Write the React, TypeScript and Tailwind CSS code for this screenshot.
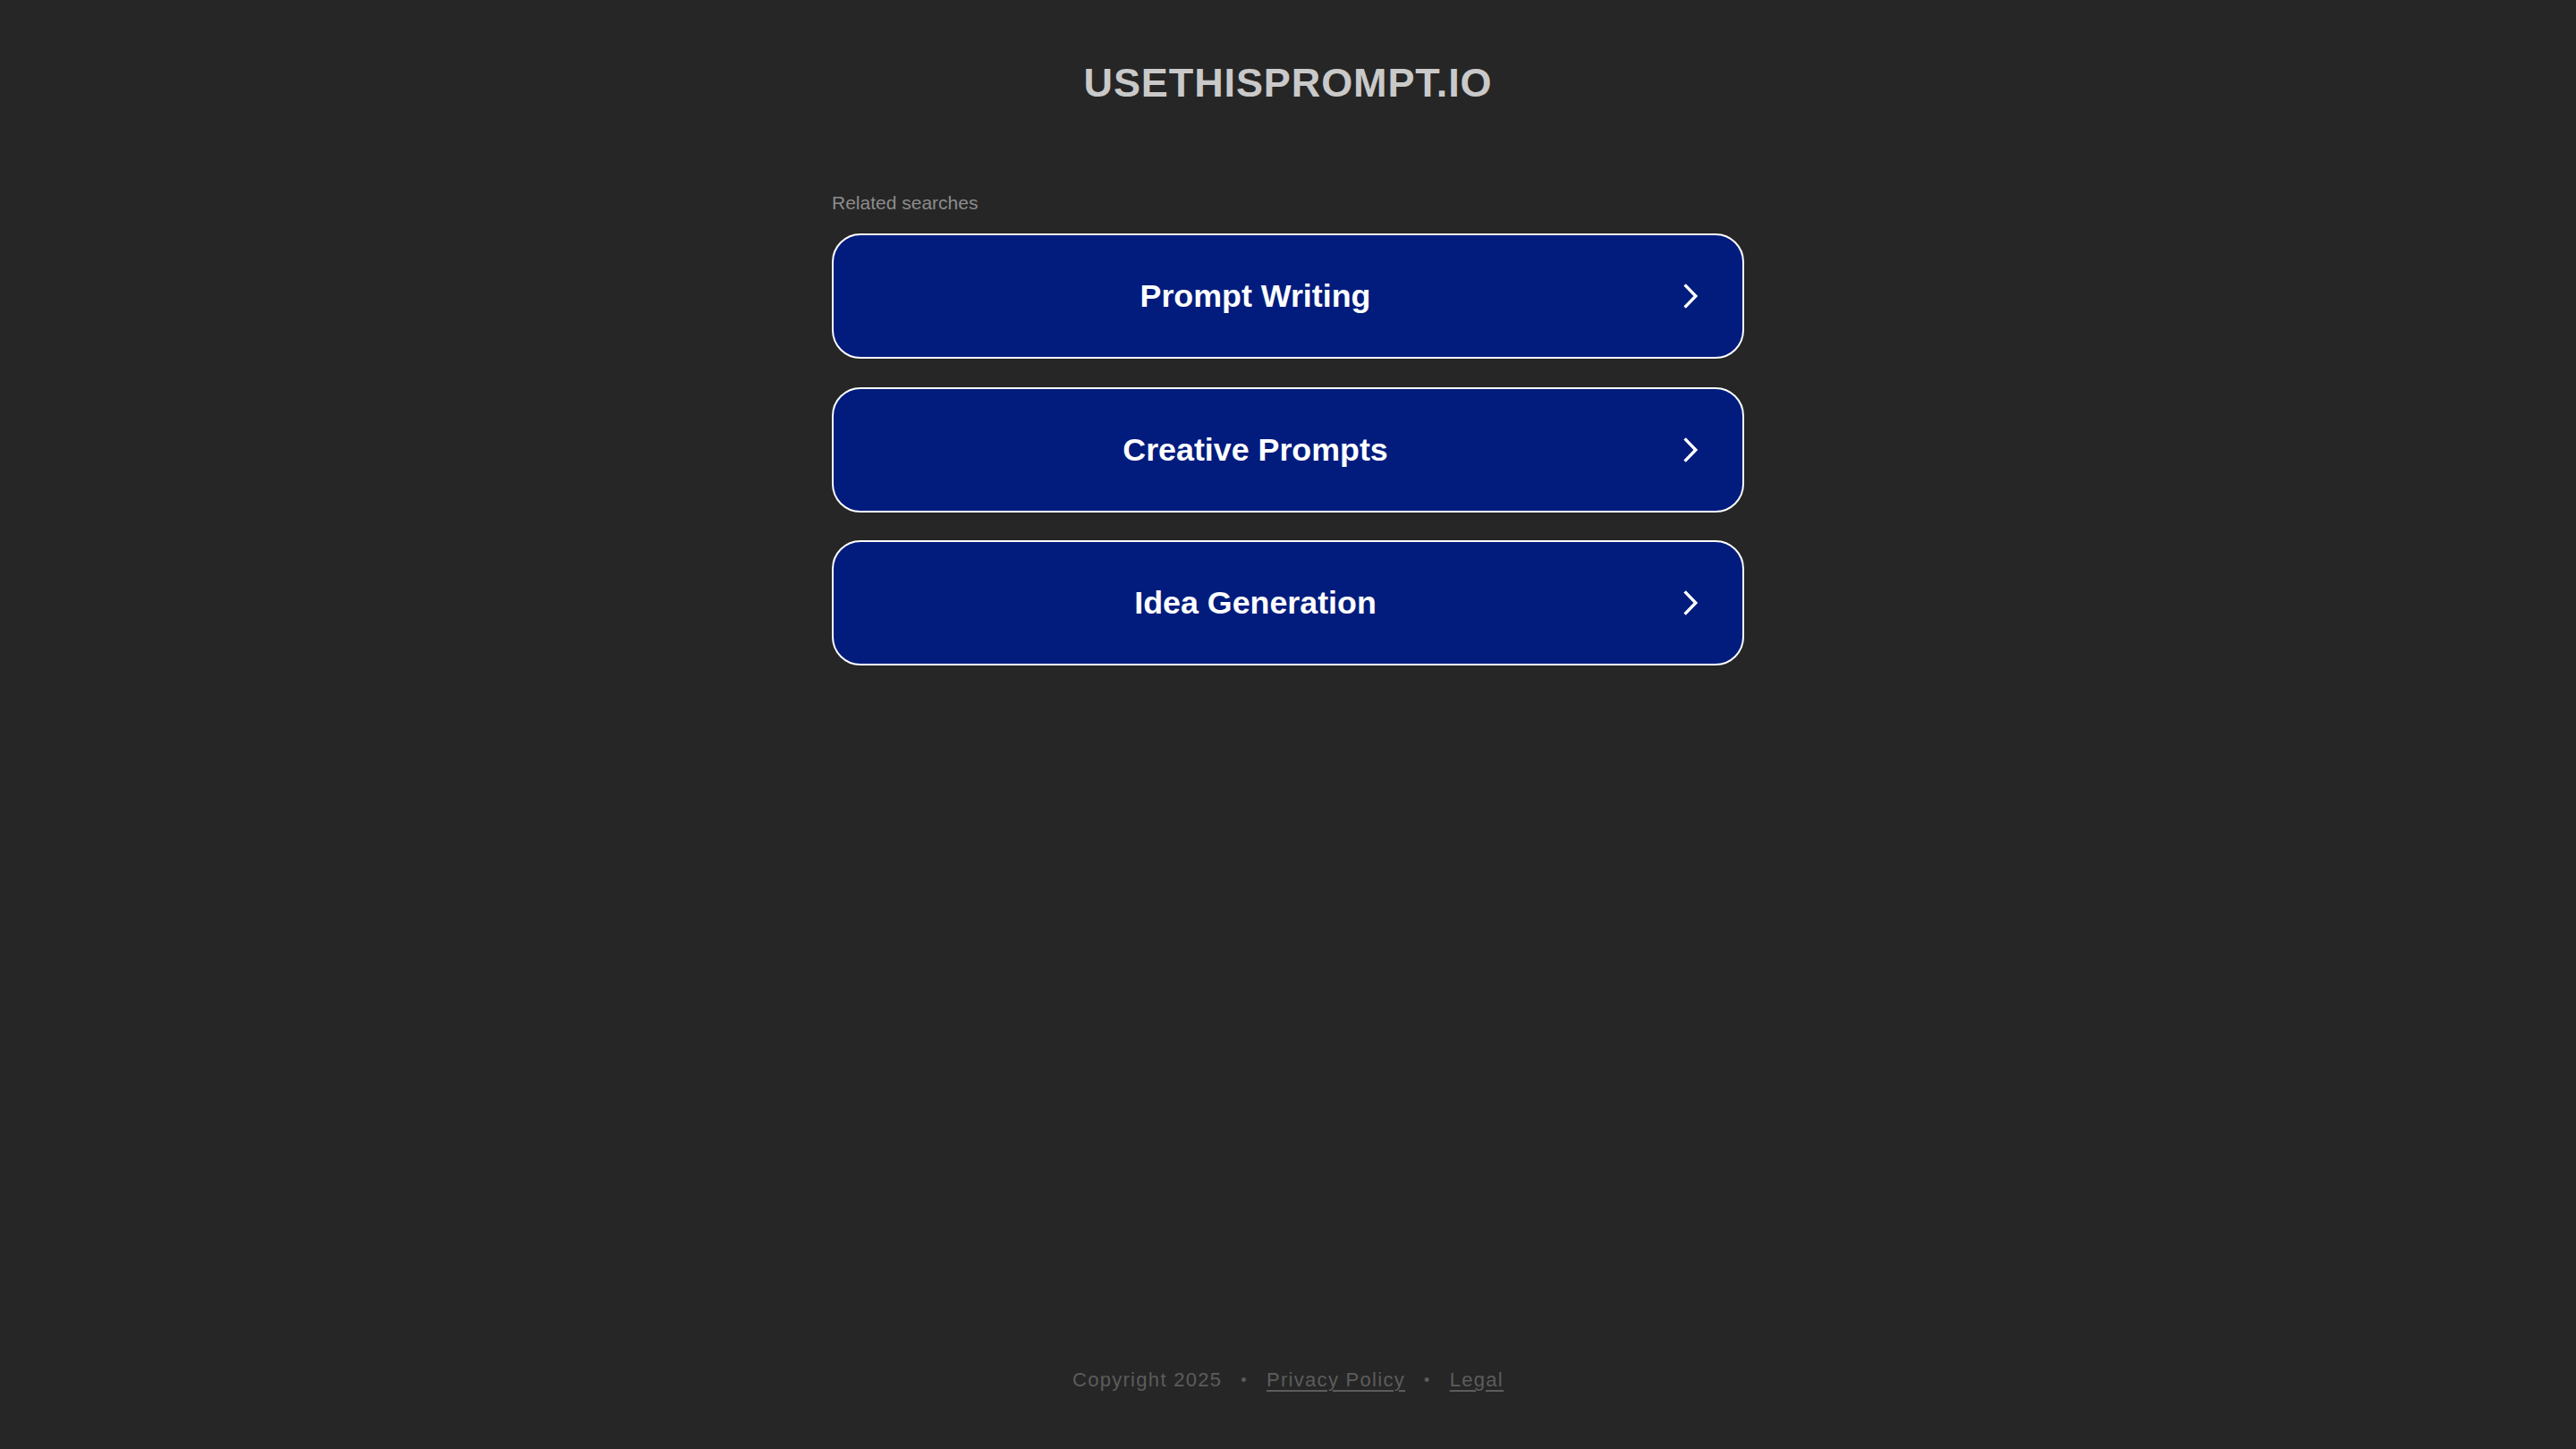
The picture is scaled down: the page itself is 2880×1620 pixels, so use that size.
import React from "react";

const items = ["Prompt Writing", "Creative Prompts", "Idea Generation"];

function Chevron() {
  return (
    <svg width="18" height="30" viewBox="0 0 18 30" fill="none" aria-hidden="true">
      <path d="M2.6 2.4 L14.8 15 L2.6 27.6" stroke="#ffffff" strokeWidth="3.4" strokeLinejoin="miter" />
    </svg>
  );
}

export default function App() {
  return (
    <div
      className="h-screen w-full bg-[#262626] flex flex-col items-center"
      style={{ fontFamily: '"Liberation Sans", Arial, Helvetica, sans-serif' }}
    >
      <h1 className="pt-[67px] text-[45px] leading-[52px] font-bold text-[#c9c9c9] tracking-[0.9px]">
        USETHISPROMPT.IO
      </h1>

      <div className="w-[1020px] mt-[95px] flex flex-col">
        <div className="text-[21px] leading-[25px] text-[#8c8c8c] mb-[22px]">Related searches</div>
        <div className="flex flex-col gap-[31.5px]">
          {items.map((t) => (
            <a
              key={t}
              href="#"
              className="h-[140px] rounded-[32px] border-[2.5px] border-white bg-[#011c7d] flex items-center"
            >
              <span className="flex-1 text-center text-white font-bold text-[35.8px] leading-[40px]">{t}</span>
              <span className="w-[24px] mr-[49px] flex justify-end items-center">
                <Chevron />
              </span>
            </a>
          ))}
        </div>
      </div>

      <div className="flex-1" />

      <footer className="pb-[64px] flex items-center text-[22px] leading-[26px] tracking-[1.3px] text-[#5c5c5c]">
        <span>Copyright 2025</span>
        <span className="mx-[21px] text-[18px]">•</span>
        <a href="#" className="underline underline-offset-[4px]">Privacy Policy</a>
        <span className="mx-[21px] text-[18px]">•</span>
        <a href="#" className="underline underline-offset-[4px]">Legal</a>
      </footer>
    </div>
  );
}
